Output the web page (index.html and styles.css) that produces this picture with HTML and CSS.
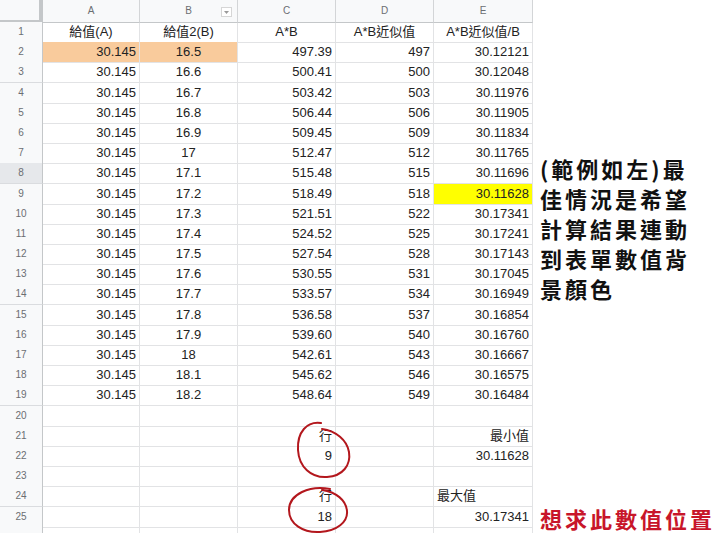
FILE: index.html
```html
<!DOCTYPE html>
<html lang="zh-Hant">
<head>
<meta charset="utf-8">
<title>Sheet</title>
<link rel="stylesheet" href="styles.css">
</head>
<body>
<div class="page">
  <div class="sheet">
    <div class="row head">
      <div class="corner"></div>
      <div class="ch">A</div>
      <div class="ch filt">B<span class="filter"><svg width="11" height="10" viewBox="0 0 11 10"><rect x="0.5" y="0.5" width="10" height="9" fill="#fff" stroke="#d6d6d6"/><path d="M3 4 L8 4 L5.5 7 Z" fill="#9a9a9a"/></svg></span></div>
      <div class="ch">C</div>
      <div class="ch">D</div>
      <div class="ch">E</div>
    </div>
    <div class="row"><div class="rh">1</div><div class="c m">給值(A)</div><div class="c m">給值2(B)</div><div class="c m">A*B</div><div class="c m">A*B近似值</div><div class="c m">A*B近似值/B</div></div>
    <div class="row"><div class="rh">2</div><div class="c n orange">30.145</div><div class="c m orange">16.5</div><div class="c n">497.39</div><div class="c n">497</div><div class="c n">30.12121</div></div>
    <div class="row"><div class="rh">3</div><div class="c n">30.145</div><div class="c m">16.6</div><div class="c n">500.41</div><div class="c n">500</div><div class="c n">30.12048</div></div>
    <div class="row"><div class="rh">4</div><div class="c n">30.145</div><div class="c m">16.7</div><div class="c n">503.42</div><div class="c n">503</div><div class="c n">30.11976</div></div>
    <div class="row"><div class="rh">5</div><div class="c n">30.145</div><div class="c m">16.8</div><div class="c n">506.44</div><div class="c n">506</div><div class="c n">30.11905</div></div>
    <div class="row"><div class="rh">6</div><div class="c n">30.145</div><div class="c m">16.9</div><div class="c n">509.45</div><div class="c n">509</div><div class="c n">30.11834</div></div>
    <div class="row"><div class="rh">7</div><div class="c n">30.145</div><div class="c m">17</div><div class="c n">512.47</div><div class="c n">512</div><div class="c n">30.11765</div></div>
    <div class="row"><div class="rh sel">8</div><div class="c n">30.145</div><div class="c m">17.1</div><div class="c n">515.48</div><div class="c n">515</div><div class="c n">30.11696</div></div>
    <div class="row"><div class="rh">9</div><div class="c n">30.145</div><div class="c m">17.2</div><div class="c n">518.49</div><div class="c n">518</div><div class="c n yellow">30.11628</div></div>
    <div class="row"><div class="rh">10</div><div class="c n">30.145</div><div class="c m">17.3</div><div class="c n">521.51</div><div class="c n">522</div><div class="c n">30.17341</div></div>
    <div class="row"><div class="rh">11</div><div class="c n">30.145</div><div class="c m">17.4</div><div class="c n">524.52</div><div class="c n">525</div><div class="c n">30.17241</div></div>
    <div class="row"><div class="rh">12</div><div class="c n">30.145</div><div class="c m">17.5</div><div class="c n">527.54</div><div class="c n">528</div><div class="c n">30.17143</div></div>
    <div class="row"><div class="rh">13</div><div class="c n">30.145</div><div class="c m">17.6</div><div class="c n">530.55</div><div class="c n">531</div><div class="c n">30.17045</div></div>
    <div class="row"><div class="rh">14</div><div class="c n">30.145</div><div class="c m">17.7</div><div class="c n">533.57</div><div class="c n">534</div><div class="c n">30.16949</div></div>
    <div class="row"><div class="rh">15</div><div class="c n">30.145</div><div class="c m">17.8</div><div class="c n">536.58</div><div class="c n">537</div><div class="c n">30.16854</div></div>
    <div class="row"><div class="rh">16</div><div class="c n">30.145</div><div class="c m">17.9</div><div class="c n">539.60</div><div class="c n">540</div><div class="c n">30.16760</div></div>
    <div class="row"><div class="rh">17</div><div class="c n">30.145</div><div class="c m">18</div><div class="c n">542.61</div><div class="c n">543</div><div class="c n">30.16667</div></div>
    <div class="row"><div class="rh">18</div><div class="c n">30.145</div><div class="c m">18.1</div><div class="c n">545.62</div><div class="c n">546</div><div class="c n">30.16575</div></div>
    <div class="row"><div class="rh">19</div><div class="c n">30.145</div><div class="c m">18.2</div><div class="c n">548.64</div><div class="c n">549</div><div class="c n">30.16484</div></div>
    <div class="row"><div class="rh">20</div><div class="c"></div><div class="c"></div><div class="c"></div><div class="c"></div><div class="c"></div></div>
    <div class="row"><div class="rh">21</div><div class="c"></div><div class="c"></div><div class="c n">行</div><div class="c"></div><div class="c n">最小值</div></div>
    <div class="row"><div class="rh">22</div><div class="c"></div><div class="c"></div><div class="c n">9</div><div class="c"></div><div class="c n">30.11628</div></div>
    <div class="row"><div class="rh">23</div><div class="c"></div><div class="c"></div><div class="c"></div><div class="c"></div><div class="c"></div></div>
    <div class="row"><div class="rh">24</div><div class="c"></div><div class="c"></div><div class="c n">行</div><div class="c"></div><div class="c l">最大值</div></div>
    <div class="row"><div class="rh">25</div><div class="c"></div><div class="c"></div><div class="c n">18</div><div class="c"></div><div class="c n">30.17341</div></div>
    <div class="row tail"><div class="rh"></div><div class="c"></div><div class="c"></div><div class="c"></div><div class="c"></div><div class="c"></div></div>
    <svg class="marks" width="533" height="547" viewBox="0 0 533 547">
      <path d="M321 423 C307 421 297 432 298 450 C299 467 311 478 327 477 C343 476 351 465 349 452 C347 440 336 431 322 429" fill="none" stroke="#b3171d" stroke-width="2" stroke-linecap="round"/>
      <path d="M330 489 C310 485 289 494 289 510 C289 524 303 533 320 532 C337 531 348 522 347 511 C346 500 336 492 322 490" fill="none" stroke="#b3171d" stroke-width="2" stroke-linecap="round"/>
    </svg>
  </div>
  <div class="notes">
    <p class="note">(範例如左)最佳情況是希望計算結果連動到表單數值背景顏色</p>
    <p class="ask">想求此數值位置</p>
  </div>
</div>
</body>
</html>
```
FILE: styles.css
```css
html, body {
  margin: 0;
  padding: 0;
  background: #ffffff;
  overflow: hidden;
}
.page {
  display: flex;
  width: 720px;
  height: 547px;
}
.sheet {
  position: relative;
  width: 533px;
  flex: none;
  font-family: "Liberation Sans", Arial, "Noto Sans CJK TC", sans-serif;
  font-size: 13px;
  color: #222222;
}
.row {
  display: grid;
  grid-template-columns: 43px 97px 98px 98px 98px 99px;
  height: 20.2px;
}
.row.head {
  height: 22px;
}
.row.tail {
  height: 6px;
}
.row.tail > div {
  border-bottom: none;
}
.corner {
  background: #f8f9fa;
  border-right: 4px solid #c4c7c9;
  border-bottom: 3px solid #c4c7c9;
  box-sizing: border-box;
}
.ch {
  position: relative;
  background: #f8f9fa;
  border-right: 1px solid #d3d5d7;
  border-bottom: 1px solid #c4c7c9;
  box-sizing: border-box;
  text-align: center;
  font-size: 10px;
  color: #6b6e72;
  line-height: 22px;
}
.filter {
  position: absolute;
  right: 5px;
  top: 7px;
  display: block;
  line-height: 0;
}
.rh {
  background: #f8f9fa;
  border-right: 1px solid #c4c7c9;
  border-bottom: 1px solid #dadcdf;
  box-sizing: border-box;
  text-align: center;
  font-size: 10px;
  color: #6b6e72;
  line-height: 20px;
}
.rh.sel {
  background: #e6e8eb;
}
.c {
  border-right: 1px solid #e2e3e5;
  border-bottom: 1px solid #e2e3e5;
  box-sizing: border-box;
  line-height: 20px;
  padding: 0 3px;
  white-space: nowrap;
  overflow: hidden;
}
.n { text-align: right; }
.m { text-align: center; }
.l { text-align: left; }
.orange { background: #f9cb9c; }
.yellow { background: #ffff00; }
.marks {
  position: absolute;
  left: 0;
  top: 0;
  pointer-events: none;
}
.notes {
  flex: 1;
  padding-left: 7px;
  font-family: "Noto Sans CJK TC", "Noto Sans CJK SC", sans-serif;
  font-weight: 700;
  font-size: 22px;
  line-height: 30px;
  letter-spacing: 3px;
}
.note {
  margin: 153px 0 0 0;
  width: 160px;
  color: #111111;
}
.ask {
  margin: 200px 0 0 0;
  color: #c8162a;
  white-space: nowrap;
}
```
